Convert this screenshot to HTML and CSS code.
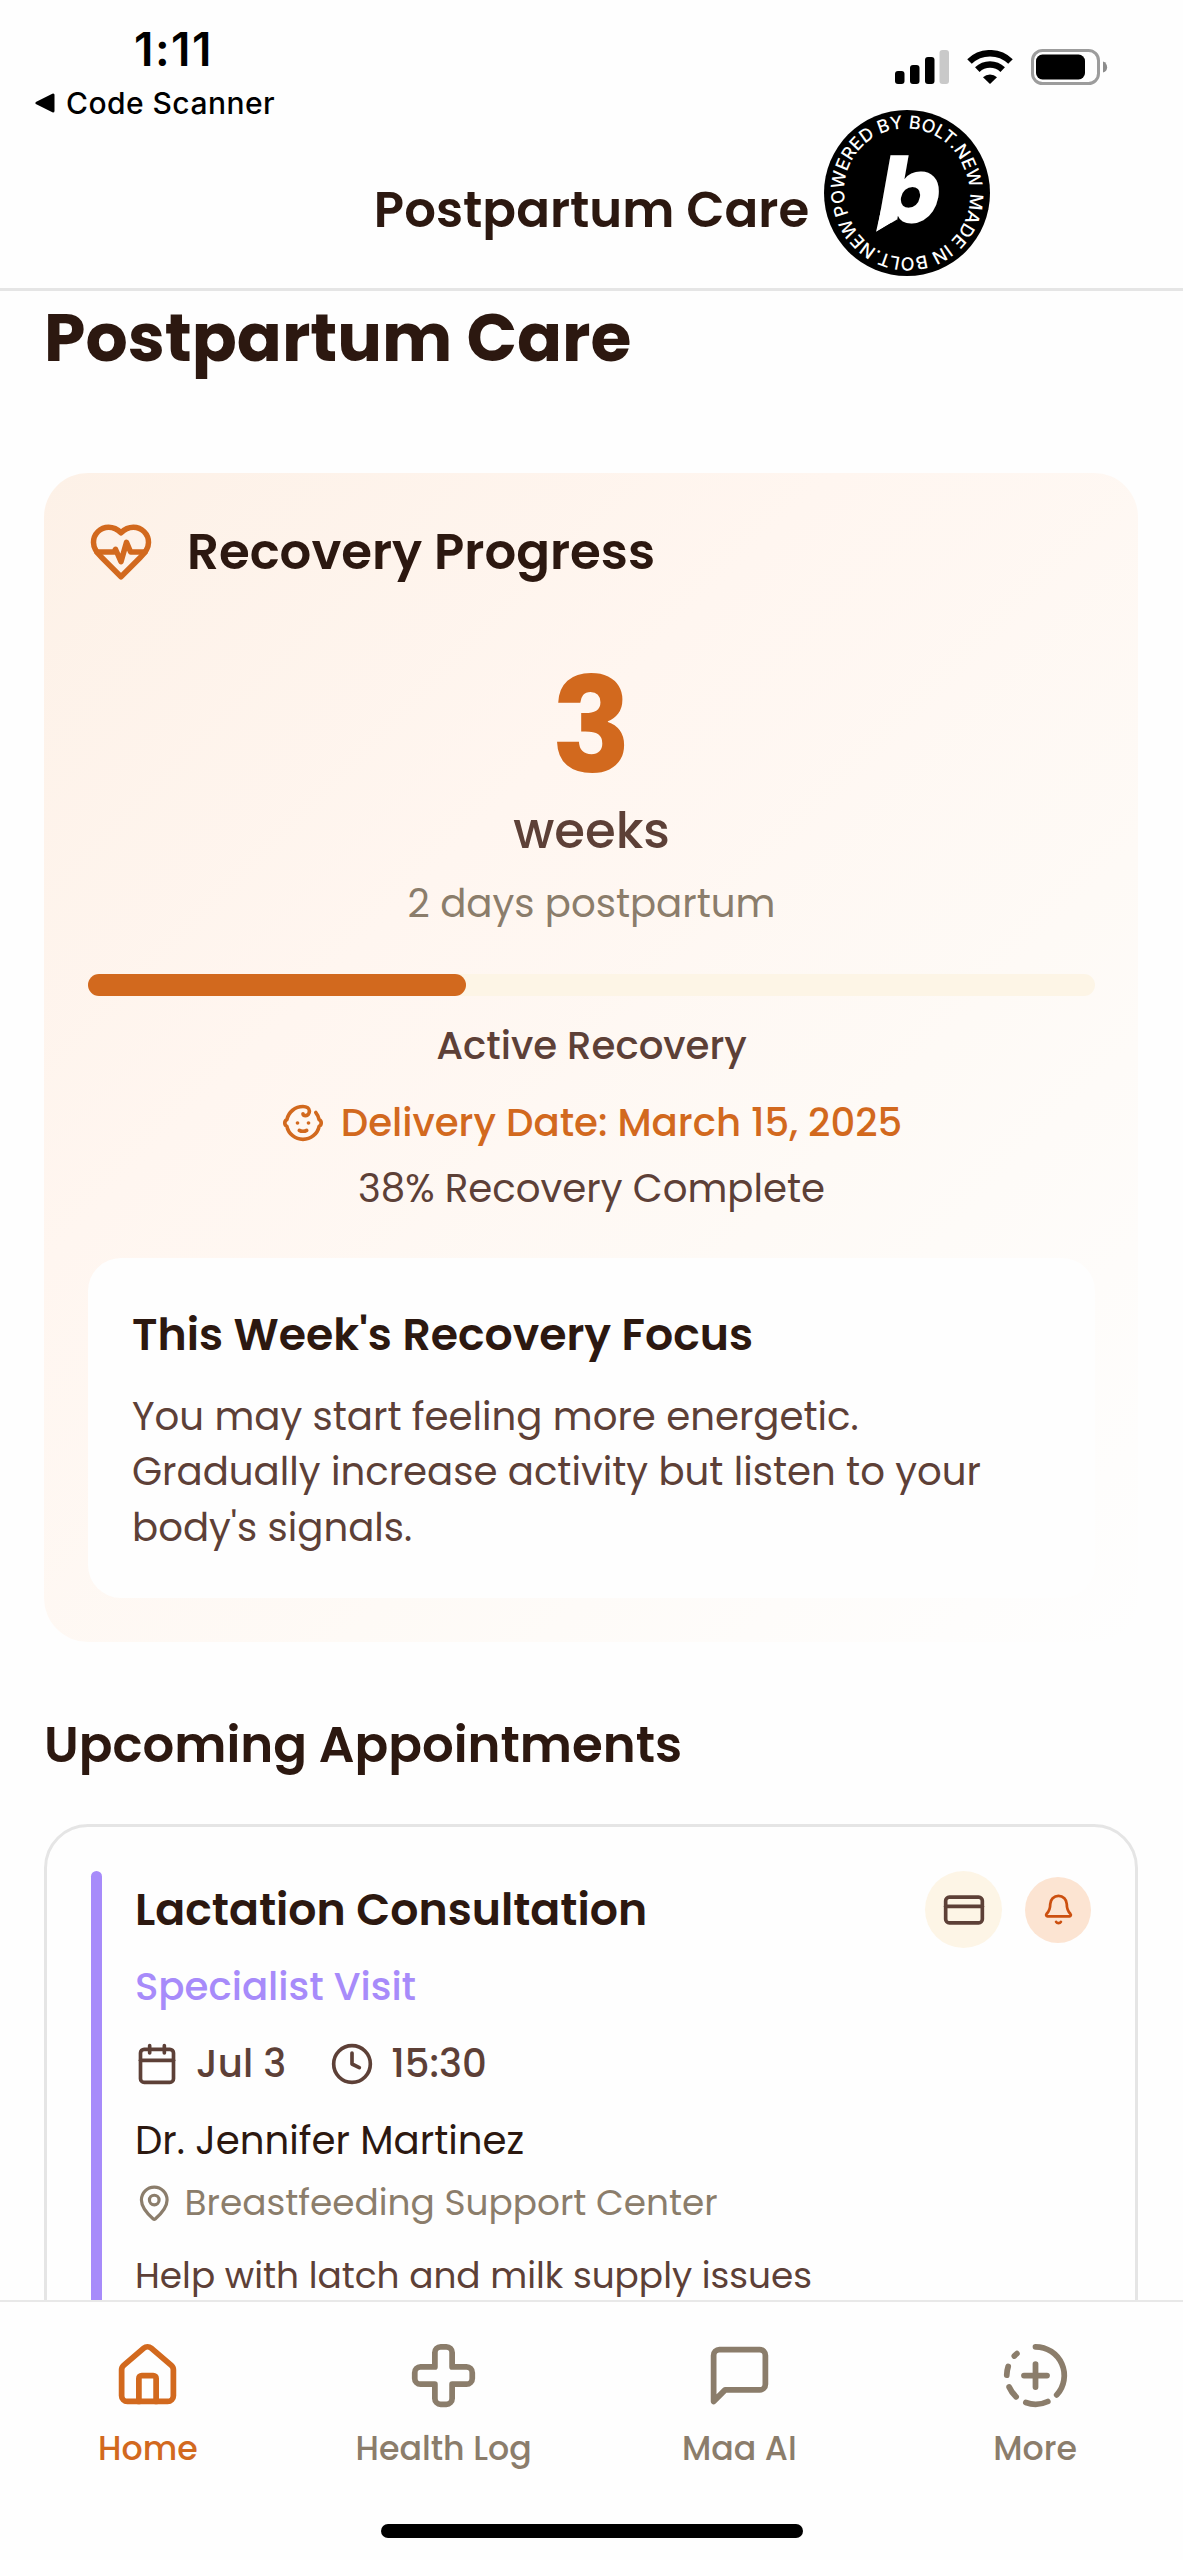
FILE: index.html
```
<!DOCTYPE html>
<html lang="en">
<head>
  <meta charset="UTF-8" />
  <meta name="viewport" content="width=device-width, initial-scale=1.0"/>
  <title>Postpartum Care</title>
  <link rel="stylesheet" href="styles.css">
</head>
<body>

  <div class="status-bar">
    <div class="status-left">
      <div class="time">1:11</div>
      <div class="back-app">
        <svg width="20" height="20" viewBox="0 0 20 20"><path d="M18 2v16L2 10z" fill="#000" stroke="#000" stroke-width="3" stroke-linejoin="round"/></svg>
        <span>Code Scanner</span>
      </div>
    </div>
    <div class="status-right">
      <svg width="54" height="34" viewBox="0 0 54 34">
        <rect x="0" y="21" width="9.5" height="13" rx="3"/>
        <rect x="15" y="15" width="9.5" height="19" rx="3"/>
        <rect x="30" y="7" width="9.5" height="27" rx="3"/>
        <rect x="44.5" y="0" width="9.5" height="34" rx="3" fill="#c9c9c9"/>
      </svg>
      <svg class="wifi" width="46" height="34" viewBox="0 0 46 34">
        <path d="M2.5 11.5a29.5 29.5 0 0 1 41 0" fill="none" stroke="#000" stroke-width="6.5"/>
        <path d="M10.3 19.7a18.3 18.3 0 0 1 25.4 0" fill="none" stroke="#000" stroke-width="6.5"/>
        <path d="M16 27.2a10.2 10.2 0 0 1 14 0L23 34z"/>
      </svg>
      <svg class="battery" width="77" height="36" viewBox="0 0 77 36">
        <rect x="1.5" y="1.5" width="66" height="33" rx="10" fill="none" stroke="#9c9c9c" stroke-width="3"/>
        <rect x="5" y="5.5" width="49" height="25" rx="6.5"/>
        <path d="M72 12.5c5.5 1.5 5.5 10 0 11z" fill="#8c8c8c"/>
      </svg>
    </div>
  </div>

  <header class="header">
    <div class="header-title">Postpartum Care</div>
    <svg class="bolt-badge" width="166" height="166" viewBox="0 0 166 166">
      <defs>
        <path id="ring" d="M24.8 104.2A62 62 0 1 1 141.2 61.8A62 62 0 1 1 24.8 104.2"/>
      </defs>
      <circle cx="83" cy="83" r="83"/>
      <text class="ring-text"><textPath href="#ring">POWERED BY BOLT.NEW MADE IN BOLT.NEW</textPath></text>
      <text class="bolt-letter" x="54" y="113">b</text>
      <path d="M57 100L52 122L73 109.5V100z" fill="#fff"/>
      <path d="M52 122L73 109.5L73.5 116L60 124z"/>
    </svg>
  </header>

  <main class="content">
    <h1>Postpartum Care</h1>

    <section class="recovery-card">
      <div class="recovery-header">
        <svg class="icon" width="66" height="66" viewBox="0 0 24 24"><path d="M19 14c1.49-1.46 3-3.21 3-5.5A5.5 5.5 0 0 0 16.5 3c-1.76 0-3 .5-4.5 2-1.5-1.5-2.74-2-4.5-2A5.5 5.5 0 0 0 2 8.5c0 2.3 1.5 4.05 3 5.5l7 7Z"/><path d="M3.22 12H9.5l.5-1 2 4.5 2-7 1.5 3.5h5.27"/></svg>
        <h2 class="recovery-title">Recovery Progress</h2>
      </div>
      <div class="week-number">3</div>
      <div class="week-label">weeks</div>
      <div class="days">2 days postpartum</div>
      <div class="progress-track"><div class="progress-fill" style="width: 37.5%"></div></div>
      <div class="phase">Active Recovery</div>
      <div class="delivery">
        <svg class="icon" width="44" height="44" viewBox="0 0 24 24"><path d="M9 12h.01"/><path d="M15 12h.01"/><path d="M10 16c.5.3 1.2.5 2 .5s1.5-.2 2-.5"/><path d="M19 6.3a9 9 0 0 1 1.8 3.9 2 2 0 0 1 0 3.6 9 9 0 0 1-17.6 0 2 2 0 0 1 0-3.6A9 9 0 0 1 12 3c2 0 3.5 1.1 3.5 2.5s-.9 2.5-2 2.5c-.8 0-1.5-.4-1.5-1"/></svg>
        <span>Delivery Date: March 15, 2025</span>
      </div>
      <div class="complete">38% Recovery Complete</div>
      <div class="focus-box">
        <h3>This Week's Recovery Focus</h3>
        <p>You may start feeling more energetic.<br>Gradually increase activity but listen to your<br>body's signals.</p>
      </div>
    </section>

    <h2 class="section-title">Upcoming Appointments</h2>

    <section class="appointment-card">
      <div class="type-bar"></div>
      <div class="appointment-body">
        <div class="appointment-header">
          <h3>Lactation Consultation</h3>
          <div class="actions">
            <span class="card-btn"><svg class="icon" width="44" height="44" viewBox="0 0 24 24"><rect x="2" y="5" width="20" height="14" rx="2"/><path d="M2 10h20"/></svg></span>
            <span class="bell-btn"><svg class="icon" width="33" height="33" viewBox="0 0 24 24"><path d="M10.268 21a2 2 0 0 0 3.464 0"/><path d="M3.262 15.326A1 1 0 0 0 4 17h16a1 1 0 0 0 .74-1.673C19.41 13.956 18 12.499 18 8A6 6 0 0 0 6 8c0 4.499-1.411 5.956-2.738 7.326"/></svg></span>
          </div>
        </div>
        <div class="visit-type">Specialist Visit</div>
        <div class="date-row">
          <svg class="icon" width="44" height="44" viewBox="0 0 24 24"><path d="M8 2v4"/><path d="M16 2v4"/><rect x="3" y="4" width="18" height="18" rx="2"/><path d="M3 10h18"/></svg>
          <span class="date">Jul 3</span>
          <svg class="icon" width="44" height="44" viewBox="0 0 24 24"><circle cx="12" cy="12" r="10"/><path d="M12 6v6l4 2"/></svg>
          <span class="hour">15:30</span>
        </div>
        <div class="doctor">Dr. Jennifer Martinez</div>
        <div class="place">
          <svg class="icon" width="38.5" height="38.5" viewBox="0 0 24 24"><path d="M20 10c0 4.993-5.539 10.193-7.399 11.799a1 1 0 0 1-1.202 0C9.539 20.193 4 14.993 4 10a8 8 0 0 1 16 0"/><circle cx="12" cy="10" r="3"/></svg>
          <span>Breastfeeding Support Center</span>
        </div>
        <div class="notes">Help with latch and milk supply issues</div>
      </div>
    </section>
  </main>

  <nav class="tab-bar">
    <div class="tabs">
      <div class="tab active">
        <svg class="icon" width="69" height="69" viewBox="0 0 24 24"><path d="M15 21v-8a1 1 0 0 0-1-1h-4a1 1 0 0 0-1 1v8"/><path d="M3 10a2 2 0 0 1 .709-1.528l7-5.999a2 2 0 0 1 2.582 0l7 5.999A2 2 0 0 1 21 10v9a2 2 0 0 1-2 2H5a2 2 0 0 1-2-2z"/></svg>
        <span>Home</span>
      </div>
      <div class="tab">
        <svg class="icon" width="69" height="69" viewBox="0 0 24 24"><path d="M11 2a2 2 0 0 0-2 2v5H4a2 2 0 0 0-2 2v2c0 1.1.9 2 2 2h5v5c0 1.1.9 2 2 2h2a2 2 0 0 0 2-2v-5h5a2 2 0 0 0 2-2v-2a2 2 0 0 0-2-2h-5V4a2 2 0 0 0-2-2z"/></svg>
        <span>Health Log</span>
      </div>
      <div class="tab">
        <svg class="icon" width="69" height="69" viewBox="0 0 24 24"><path d="M21 15a2 2 0 0 1-2 2H7l-4 4V5a2 2 0 0 1 2-2h14a2 2 0 0 1 2 2z"/></svg>
        <span>Maa AI</span>
      </div>
      <div class="tab">
        <svg class="icon" width="69" height="69" viewBox="0 0 24 24"><path d="M12 2a10 10 0 0 1 7.38 16.75"/><path d="M12 8v8"/><path d="M16 12H8"/><path d="M2.5 8.875a10 10 0 0 0-.5 3"/><path d="M2.83 16a10 10 0 0 0 2.43 3.4"/><path d="M4.636 5.235a10 10 0 0 1 .891-.857"/><path d="M8.644 21.42a10 10 0 0 0 7.631-.38"/></svg>
        <span>More</span>
      </div>
    </div>
    <div class="home-indicator"></div>
  </nav>

</body>
</html>
```
FILE: styles.css
```
* {
  box-sizing: border-box;
  margin: 0;
  padding: 0;
}

body {
  width: 1183px;
  height: 2560px;
  overflow: hidden;
  display: flex;
  flex-direction: column;
  background: #fefefe;
  font-family: 'Poppins', 'Inter', sans-serif;
  font-size: 38.7px;
  line-height: 54px;
  color: #2c1810;
  white-space: nowrap;
}

svg {
  display: block;
  flex-shrink: 0;
}

.icon {
  fill: none;
  stroke: currentColor;
  stroke-width: 2;
  stroke-linecap: round;
  stroke-linejoin: round;
}

/* status bar */
.status-bar {
  height: 131px;
  flex-shrink: 0;
  display: flex;
  justify-content: space-between;
  padding: 0 75px 0 35px;
  color: #000;
  font-family: 'Inter', sans-serif;
}

.time {
  margin-top: 21px;
  padding-left: 99px;
  font-size: 46px;
  font-weight: 600;
  line-height: 57px;
  letter-spacing: 1.5px;
}

.back-app {
  display: flex;
  align-items: center;
  gap: 11px;
  font-size: 30px;
  font-weight: 500;
  line-height: 50px;
  letter-spacing: 0.45px;
}

.status-right {
  display: flex;
  align-items: center;
  height: 134px;
}

.wifi {
  margin-left: 18px;
}

.battery {
  margin-left: 18px;
}

/* header */
.header {
  position: relative;
  height: 160px;
  flex-shrink: 0;
  border-bottom: 3px solid #e5e5e5;
}

.header-title {
  text-align: center;
  font-size: 49.8px;
  font-weight: 600;
  line-height: 157px;
}

.bolt-badge {
  position: absolute;
  left: 824px;
  top: -21px;
}

.ring-text {
  font-family: 'Inter', sans-serif;
  font-size: 18px;
  font-weight: 500;
  fill: #fff;
}

.bolt-letter {
  font-size: 92px;
  font-weight: 800;
  font-style: italic;
  fill: #fff;
}

/* content */
.content {
  flex: 1;
  min-height: 0;
  overflow: hidden;
  padding: 7px 45px 0 44px;
}

h1 {
  font-size: 66.4px;
  font-weight: 700;
  line-height: 80px;
}

.recovery-card {
  height: 1169px;
  margin-top: 95px;
  padding: 46px 43px 0 44px;
  border-radius: 44px;
  background: linear-gradient(135deg, #fdf1e7 0%, #fff6f0 35%, #fefaf6 65%, #fefefe 100%);
  text-align: center;
}

.recovery-header {
  display: flex;
  align-items: center;
  gap: 33px;
  color: #d2691e;
}

.recovery-title {
  font-size: 49.8px;
  font-weight: 600;
  line-height: 66px;
  color: #2c1810;
}

.week-number {
  margin-top: 75px;
  font-size: 132px;
  font-weight: 700;
  line-height: 132px;
  color: #d2691e;
}

.week-label {
  margin-top: 9px;
  font-size: 49.8px;
  font-weight: 500;
  line-height: 60px;
  color: #5d4037;
}

.days {
  margin-top: 16px;
  color: #8b7d6b;
}

.progress-track {
  height: 22px;
  margin-top: 43px;
  border-radius: 11px;
  background: #fdf5e6;
}

.progress-fill {
  height: 100%;
  border-radius: 11px;
  background: #d2691e;
}

.phase {
  margin-top: 23px;
  font-weight: 500;
  color: #5d4037;
}

.delivery {
  display: flex;
  align-items: center;
  justify-content: center;
  gap: 16px;
  margin-top: 23px;
  font-weight: 500;
  color: #d2691e;
}

.complete {
  margin-top: 12px;
  color: #5d4037;
}

.focus-box {
  height: 340px;
  margin-top: 42px;
  padding: 45px 44px;
  border-radius: 33px;
  background: #fefefe;
  text-align: left;
}

.focus-box h3 {
  font-size: 44.2px;
  font-weight: 600;
  line-height: 64px;
}

.focus-box p {
  margin-top: 22px;
  line-height: 55.3px;
  color: #5d4037;
}

.section-title {
  margin-top: 70px;
  font-size: 49.8px;
  font-weight: 600;
  line-height: 66px;
}

/* appointments */
.appointment-card {
  display: flex;
  gap: 33px;
  height: 640px;
  margin-top: 46px;
  padding: 44px;
  border: 3px solid #e5e5e5;
  border-radius: 44px;
}

.type-bar {
  width: 11px;
  flex-shrink: 0;
  border-radius: 6px;
  background: #a78bfa;
}

.appointment-body {
  flex: 1;
}

.appointment-header {
  display: flex;
  justify-content: space-between;
}

.appointment-header h3 {
  font-size: 44.2px;
  font-weight: 600;
  line-height: 77px;
}

.actions {
  display: flex;
  align-items: center;
  gap: 23px;
}

.card-btn,
.bell-btn {
  display: flex;
  align-items: center;
  justify-content: center;
  border-radius: 50%;
}

.card-btn {
  width: 77px;
  height: 77px;
  background: #fdf5e6;
  color: #5d4037;
}

.bell-btn {
  width: 66px;
  height: 66px;
  background: #fce4d2;
  color: #cc5010;
}

.visit-type {
  margin-top: 12px;
  font-weight: 500;
  color: #a78bfa;
}

.date-row {
  display: flex;
  align-items: center;
  margin-top: 23px;
  font-weight: 500;
  color: #5d4037;
}

.date {
  margin: 0 44px 0 17px;
}

.hour {
  margin-left: 17px;
}

.doctor {
  margin-top: 23px;
}

.place {
  display: flex;
  align-items: center;
  gap: 11px;
  margin-top: 10px;
  font-size: 35.9px;
  line-height: 50px;
  color: #8b7d6b;
}

.notes {
  margin-top: 23px;
  font-size: 35.9px;
  line-height: 50px;
  color: #5d4037;
}

/* bottom navigation */
.tab-bar {
  height: 260px;
  flex-shrink: 0;
  border-top: 2px solid #e8e8e8;
  background: #fefefe;
}

.tabs {
  display: flex;
  height: 222px;
  padding-top: 39px;
}

.tab {
  flex: 1;
  display: flex;
  flex-direction: column;
  align-items: center;
  gap: 17px;
  font-size: 33.2px;
  font-weight: 500;
  line-height: 44px;
  color: #8b7d6b;
}

.tab.active {
  color: #d2691e;
}

.home-indicator {
  width: 422px;
  height: 14px;
  margin: 0 auto;
  border-radius: 7px;
  background: #000;
}
```
